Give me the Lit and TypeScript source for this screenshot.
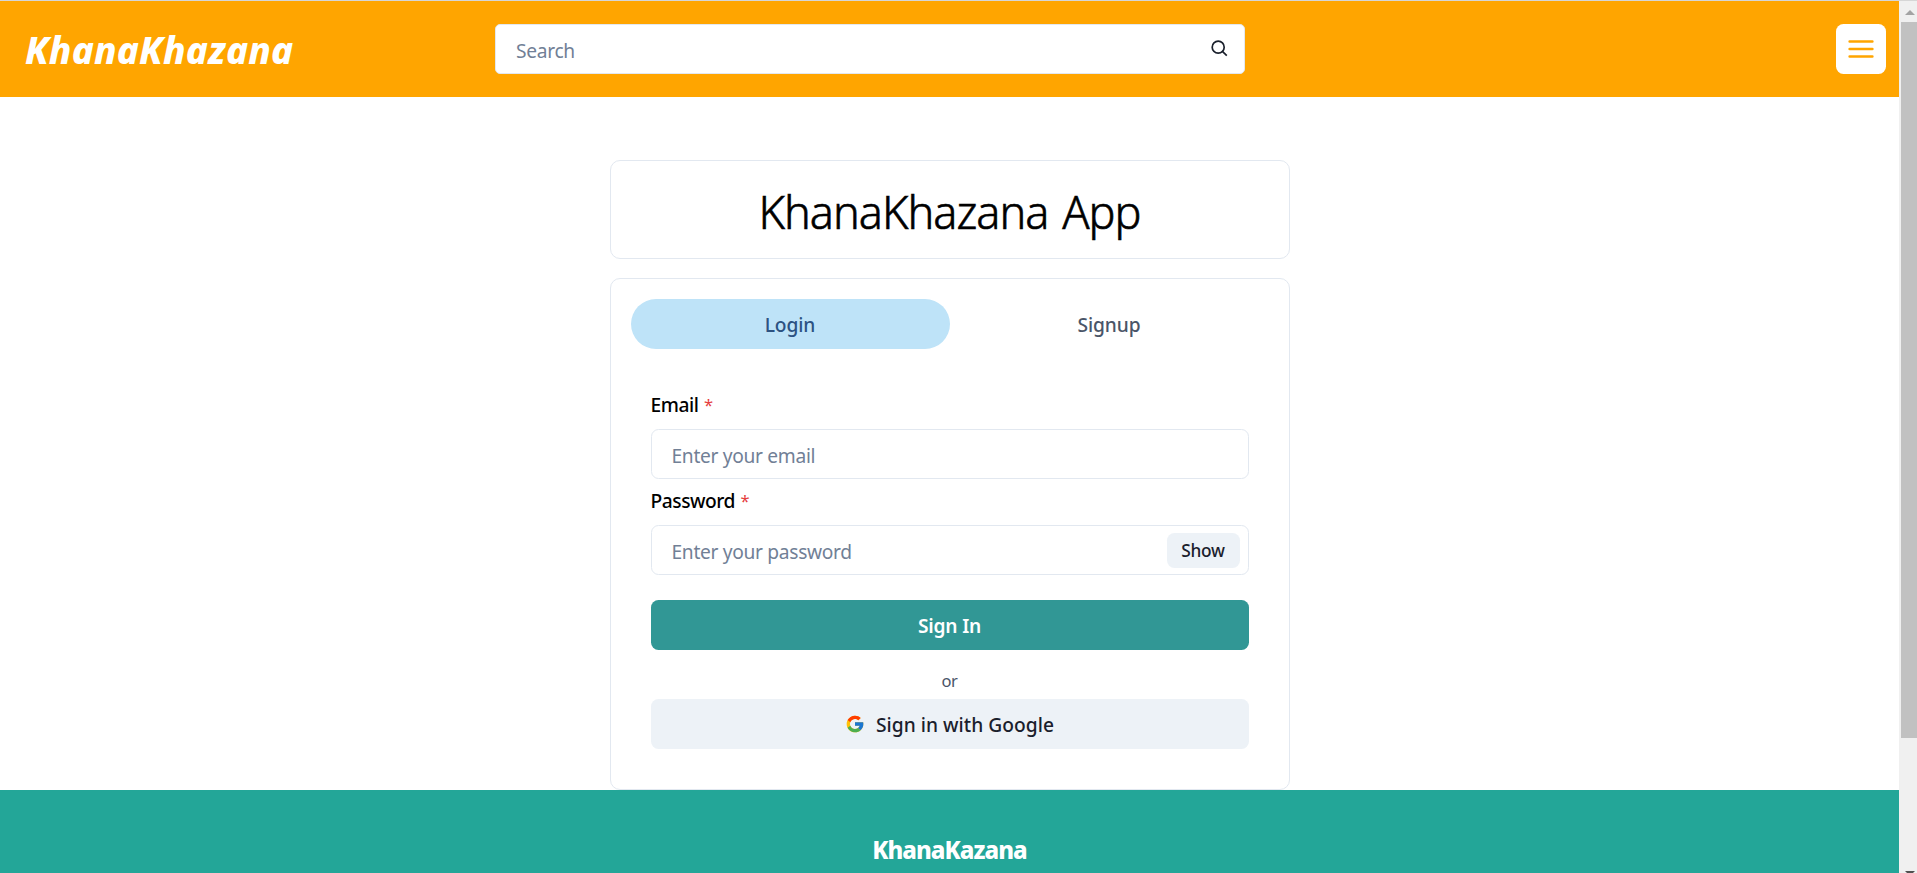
import { LitElement, html, svg, css } from "lit";
import { customElement } from "lit/decorators.js";

const searchIcon = svg`<svg class="search-icon" viewBox="0 0 20 20" width="20" height="20" fill="none" stroke="#1a202c" stroke-width="1.7">
  <circle cx="9.2" cy="8.2" r="6"></circle><path d="M13.4 12.4 17.8 16.6"></path></svg>`;

const menuIcon = svg`<svg viewBox="0 0 26 20" width="26" height="20" stroke="#ffa500" stroke-width="2.5" stroke-linecap="round">
  <path d="M1.6 2.5H24.4M1.6 10H24.4M1.6 17.5H24.4"></path></svg>`;

const googleIcon = svg`<svg viewBox="0 0 48 48" width="20" height="20">
  <path fill="#FFC107" d="M43.611,20.083H42V20H24v8h11.303c-1.649,4.657-6.08,8-11.303,8c-6.627,0-12-5.373-12-12c0-6.627,5.373-12,12-12c3.059,0,5.842,1.154,7.961,3.039l5.657-5.657C34.046,6.053,29.268,4,24,4C12.955,4,4,12.955,4,24c0,11.045,8.955,20,20,20c11.045,0,20-8.955,20-20C44,22.659,43.862,21.35,43.611,20.083z"></path>
  <path fill="#FF3D00" d="M6.306,14.691l6.571,4.819C14.655,15.108,18.961,12,24,12c3.059,0,5.842,1.154,7.961,3.039l5.657-5.657C34.046,6.053,29.268,4,24,4C16.318,4,9.656,8.337,6.306,14.691z"></path>
  <path fill="#4CAF50" d="M24,44c5.166,0,9.86-1.977,13.409-5.192l-6.19-5.238C29.211,35.091,26.715,36,24,36c-5.202,0-9.619-3.317-11.283-7.946l-6.522,5.025C9.505,39.556,16.227,44,24,44z"></path>
  <path fill="#1976D2" d="M43.611,20.083H42V20H24v8h11.303c-0.792,2.237-2.231,4.166-4.087,5.571c0.001-0.001,0.002-0.001,0.003-0.002l6.19,5.238C36.971,39.205,44,34,44,24C44,22.659,43.862,21.35,43.611,20.083z"></path></svg>`;

@customElement("app-root")
class AppRoot extends LitElement {
  static styles = css`
    :host { display: flex; height: 100vh; overflow: hidden; background: #fff; color: #000;
      font-family: "Noto Sans", "Open Sans", sans-serif; font-size: 19.2px; line-height: 30px; }
    * { box-sizing: border-box; }
    svg { display: block; flex: none; }
    button, input { font: inherit; margin: 0; border: 0; padding: 0; }
    .page { flex: 1; min-width: 0; border-top: 1px solid #d6d6d6; }
    .header { height: 96px; background: #ffa500; display: grid; grid-template-columns: 495px 750px 1fr;
      align-items: center; padding-right: 13px; }
    .logo { padding-left: 25px; color: #fff; font-size: 37px; font-weight: 800; font-style: italic;
      line-height: 50px; letter-spacing: 0.17px; padding-top: 2px; }
    .search { height: 50px; display: flex; align-items: center; background: #fff; border: 1px solid #e2e8f0;
      border-radius: 5px; padding: 0 15px 0 20px; }
    input { flex: 1; min-width: 0; height: 48px; background: none; outline: none; padding-top: 3px; }
    input::placeholder { color: #718096; opacity: 1; }
    .search input { letter-spacing: -0.3px; }
    .menu { justify-self: end; width: 50px; height: 50px; border-radius: 7.5px; background: #fff;
      display: grid; place-items: center; }
    .content { width: 680px; margin: 0 auto; padding-top: 63px; }
    .card { border: 1px solid #e2e8f0; border-radius: 10px; }
    .title { height: 99px; display: grid; place-items: center; font-size: 45px; font-weight: 300;
      -webkit-text-stroke: 0.6px #000; letter-spacing: -0.98px; word-spacing: 3px; line-height: 68px;
      margin: 0 0 19px; padding-top: 4px; }
    .auth { height: 512px; padding: 20px; }
    .tabs { display: flex; }
    .tab { flex: 1; height: 50px; border-radius: 25px; background: none; color: #4a5568; font-weight: 500;
      letter-spacing: -0.1px; padding-top: 2px; }
    .tab.active { background: #bee3f8; color: #2c5282; }
    .panel { padding: 40px 20px 20px; display: flex; flex-direction: column; }
    .label { font-weight: 500; letter-spacing: -0.45px; height: 30px; margin-bottom: 10px; padding-top: 1px; }
    .star { color: #e53e3e; font-weight: 400; font-size: 16.5px; margin-left: 1px; vertical-align: 1.5px; line-height: 1; }
    .field { height: 50px; display: flex; align-items: center; border: 1px solid #e2e8f0; border-radius: 7.5px;
      padding: 0 8px 0 20px; margin-bottom: 6px; }
    .field input { letter-spacing: -0.32px; }
    .show { width: 73px; height: 35px; border-radius: 7.5px; background: #edf2f7; color: #1a202c; font-size: 17.3px;
      font-weight: 500; letter-spacing: -0.3px; padding-top: 2px; }
    .wide { height: 50px; border-radius: 7.5px; font-weight: 500; display: flex; align-items: center;
      justify-content: center; gap: 11px; letter-spacing: 0.03px; }
    .wide span { padding-top: 2px; }
    .signin { background: #319795; color: #fff; font-weight: 600; margin-top: 19px; letter-spacing: -0.2px; }
    .or { text-align: center; font-size: 16.5px; letter-spacing: -0.3px; color: #4a5568; height: 49px; padding-top: 16px; }
    .google { background: #edf2f7; color: #1a202c; }
    .footer { height: 200px; background: #23a698; color: #fff; text-align: center; font-size: 24px; font-weight: 800;
      letter-spacing: -0.95px; padding-top: 45px; }
    .scrollbar { width: 18px; background: #f0f0f0; border-top: 1px solid #d6d6d6; padding-left: 2px;
      display: flex; flex-direction: column; }
    .up { height: 21px; padding: 9px 0 0 4px; }
    .thumb { height: 716px; background: #c1c1c1; }
    .down { margin-top: auto; height: 2px; padding-left: 4px; overflow: hidden; }
  `;
  render() {
    return html`
      <main class="page">
        <header class="header">
          <div class="logo">KhanaKhazana</div>
          <div class="search"><input placeholder="Search" />${searchIcon}</div>
          <button class="menu" aria-label="Menu">${menuIcon}</button>
        </header>
        <div class="content">
          <h1 class="card title">KhanaKhazana App</h1>
          <section class="card auth">
            <div class="tabs"><button class="tab active">Login</button><button class="tab">Signup</button></div>
            <div class="panel">
              <label class="label">Email <span class="star">*</span></label>
              <div class="field"><input placeholder="Enter your email" /></div>
              <label class="label">Password <span class="star">*</span></label>
              <div class="field"><input type="password" placeholder="Enter your password" /><button class="show">Show</button></div>
              <button class="wide signin"><span>Sign In</span></button>
              <div class="or">or</div>
              <button class="wide google">${googleIcon}<span>Sign in with Google</span></button>
            </div>
          </section>
        </div>
        <footer class="footer">KhanaKazana</footer>
      </main>
      <aside class="scrollbar">
        <div class="up"><svg width="10" height="5" viewBox="0 0 10 5"><path d="M0 5 5 0l5 5z" fill="#a3a3a3"></path></svg></div>
        <div class="thumb"></div>
        <div class="down"><svg width="10" height="5" viewBox="0 0 10 5"><path d="M0 0H10L5 5z" fill="#505050"></path></svg></div>
      </aside>`;
  }
}
